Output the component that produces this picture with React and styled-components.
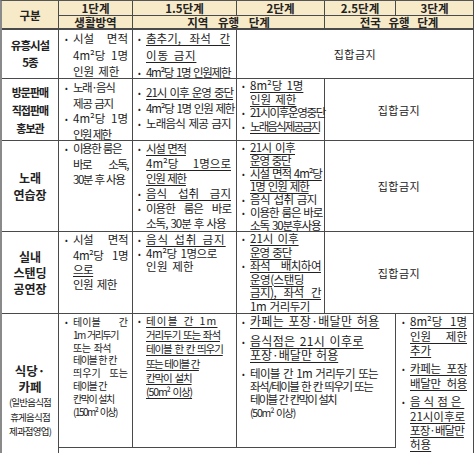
import styled, { createGlobalStyle } from "styled-components";

const GlobalStyle = createGlobalStyle`
  html, body { margin: 0; padding: 0; background: #fff; }
  body {
    font-family: "Noto Sans CJK KR", "Noto Sans", sans-serif;
    color: #222;
  }
`;

const Table = styled.div`
  display: grid;
  grid-template-columns: 57px 74px 104px 88px 71px 78px;
  grid-template-rows: 15px 14px 49px 62px 91px 82px 134px 10px;
  width: 474px;
  border-top: 1px solid #555;
  border-left: 2px solid #8a8a8a;
  box-sizing: border-box;
  font-size: 11.5px;
`;

const Cell = styled.div`
  grid-column: ${(p) => p.$c} / span ${(p) => p.$cs || 1};
  grid-row: ${(p) => p.$r} / span ${(p) => p.$rs || 1};
  border-right: 1px solid #4a4a4a;
  border-bottom: ${(p) => (p.$open ? "none" : p.$thick ? "2px solid #4a4a4a" : "1px solid #4a4a4a")};
  box-sizing: border-box;
  min-width: 0;
`;

const Head = styled(Cell)`
  background: #f7eac8;
  font-weight: 700;
  font-size: 11.5px;
  line-height: 12px;
  display: flex;
  align-items: center;
  justify-content: center;
  word-spacing: ${(p) => p.$ws || "0"};
`;

const Label = styled(Cell)`
  display: flex;
  flex-direction: column;
  align-items: center;
  justify-content: center;
  text-align: center;
  font-weight: 700;
  font-size: ${(p) => p.$fs || "12px"};
  line-height: ${(p) => p.$lh || "17px"};
  letter-spacing: ${(p) => p.$ls || "0"};
  padding-top: ${(p) => p.$pt || "0"};
`;

const Small = styled.span`
  font-weight: 400;
  font-size: 9.5px;
  line-height: 14.5px;
  letter-spacing: -0.8px;
`;

const Body = styled(Cell)`
  padding: ${(p) => p.$pad || "0 4px 0 5px"};
  line-height: ${(p) => p.$lh || "15px"};
  display: flex;
  flex-direction: column;
  gap: ${(p) => p.$gap || "0"};
  word-spacing: 1.5px;
`;

const Ban = styled(Cell)`
  display: flex;
  align-items: center;
  justify-content: center;
  font-size: 11px;
  letter-spacing: 0.5px;
`;

const Item = styled.div`
  letter-spacing: ${(p) => p.$ls || "0"};
  font-size: ${(p) => p.$fs || "inherit"};
`;

const Line = styled.span`
  display: block;
  padding-left: ${(p) => (p.$first ? "0" : "8px")};
  text-align: left;
  text-align-last: ${(p) => (p.$j ? "justify" : "left")};
  white-space: nowrap;
  ${(p) => p.$ls && `letter-spacing: ${p.$ls};`}
  ${(p) => p.$fs && `font-size: ${p.$fs};`}
`;

const U = styled.span`
  text-decoration: underline;
  text-decoration-thickness: 1px;
  text-underline-offset: 2px;
`;

const Dot = styled.span`
  display: inline-block;
  width: 8px;
  font-size: 8px;
  vertical-align: 1px;
  letter-spacing: 0;
`;

// a line is a string, or { t, ls, fs } when it is squeezed differently from its item
// j: indexes of the lines that are spread to the full cell width
function Li({ lines, u, j = [], ls, fs }) {
  return (
    <Item $ls={ls} $fs={fs}>
      {lines.map((l, i) => {
        const line = typeof l === "string" ? { t: l } : l;
        const inner = (
          <>
            {i === 0 && <Dot>•</Dot>}
            {line.t}
          </>
        );
        return (
          <Line key={i} $first={i === 0} $j={j.includes(i)} $ls={line.ls} $fs={line.fs}>
            {u ? <U>{inner}</U> : inner}
          </Line>
        );
      })}
    </Item>
  );
}

export default function App() {
  return (
    <>
      <GlobalStyle />
      <Table>
        <Head $c={1} $r={1} $rs={2} $thick>구분</Head>
        <Head $c={2} $r={1}>1단계</Head>
        <Head $c={3} $r={1}>1.5단계</Head>
        <Head $c={4} $r={1}>2단계</Head>
        <Head $c={5} $r={1}>2.5단계</Head>
        <Head $c={6} $r={1}>3단계</Head>
        <Head $c={2} $r={2} $thick>생활방역</Head>
        <Head $c={3} $r={2} $cs={2} $thick $ws="7px">지역 유행 단계</Head>
        <Head $c={5} $r={2} $cs={2} $thick $ws="5px">전국 유행 단계</Head>

        {/* 유흥시설 */}
        <Label $c={1} $r={3} $fs="11.5px" $ls="-1px">유흥시설<br />5종</Label>
        <Body $c={2} $r={3} $lh="16px" $pad="0 4px 0 6px">
          <Li lines={["시설 면적", "4m²당 1명", "인원 제한"]} j={[0, 1]} />
        </Body>
        <Body $c={3} $r={3} $lh="16px" $pad="0 6px 0 5px" $gap="1px">
          <Li u lines={["춤추기, 좌석 간", { t: "이동 금지", ls: "0.8px" }]} j={[0]} />
          <Li ls="-1.3px" lines={["4m²당 1명 인원제한"]} />
        </Body>
        <Ban $c={4} $r={3} $cs={3}>집합금지</Ban>

        {/* 방문판매 */}
        <Label $c={1} $r={4} $fs="11px" $lh="18px" $ls="-1px">방문판매<br />직접판매<br />홍보관</Label>
        <Body $c={2} $r={4} $lh="15.5px" $pad="1px 4px 0 6px">
          <Li ls="-1.3px" lines={[{ t: "노래·음식", ls: "-1.5px" }, "제공 금지"]} />
          <Li ls="-1.8px" lines={[{ t: "4m²당 1명", ls: "0" }, "인원 제한"]} j={[0]} />
        </Body>
        <Body $c={3} $r={4} $lh="15.5px" $pad="6px 4px 0 5px">
          <Li u ls="-1px" lines={["21시 이후 운영 중단"]} />
          <Li ls="-1.2px" lines={["4m²당 1명 인원 제한"]} />
          <Li ls="-0.8px" lines={["노래음식 제공 금지"]} />
        </Body>
        <Body $c={4} $r={4} $lh="13.7px" $pad="0 3px 0 5px">
          <Li u lines={["8m²당 1명", "인원 제한"]} />
          <Li ls="-1.3px" lines={["21시이후운영중단"]} />
          <Li u ls="-1.9px" lines={["노래음식제공금지"]} />
        </Body>
        <Ban $c={5} $r={4} $cs={2}>집합금지</Ban>

        {/* 노래연습장 */}
        <Label $c={1} $r={5}>노래<br />연습장</Label>
        <Body $c={2} $r={5} $lh="15.5px" $pad="0 4px 0 6px">
          <Li ls="-1.5px" lines={["이용한 룸은", "바로 소독,", "30분 후 사용"]} j={[1]} />
        </Body>
        <Body $c={3} $r={5} $lh="15.1px" $pad="0 5px 0 5px">
          <Li u ls="-1.3px" lines={["시설 면적", { t: "4m²당 1명으로", ls: "0" }, "인원 제한"]} j={[1]} />
          <Li u lines={["음식 섭취 금지"]} j={[0]} />
          <Li ls="-1px" lines={["이용한 룸은 바로", "소독, 30분 후 사용"]} j={[0]} />
        </Body>
        <Body $c={4} $r={5} $lh="13px" $pad="0 3px 0 5px">
          <Li u ls="-0.6px" lines={["21시 이후", { t: "운영 중단", ls: "-1.2px" }]} />
          <Li u ls="-1.1px" lines={["시설 면적 4m²당", "1명 인원 제한"]} j={[0]} />
          <Li ls="-0.6px" lines={["음식 섭취 금지"]} />
          <Li ls="-1.1px" lines={["이용한 룸은 바로", "소독 30분후사용"]} j={[0]} />
        </Body>
        <Ban $c={5} $r={5} $cs={2}>집합금지</Ban>

        {/* 실내 스탠딩 공연장 */}
        <Label $c={1} $r={6} $lh="16px">실내<br />스탠딩<br />공연장</Label>
        <Body $c={2} $r={6} $lh="14.5px" $pad="0 4px 0 6px">
          <Item $ls="-0.5px">
            <Line $first $j><Dot>•</Dot>시설 면적</Line>
            <Line $j>4m²당 1명</Line>
            <Line><U>으로</U></Line>
            <Line>인원 제한</Line>
          </Item>
        </Body>
        <Body $c={3} $r={6} $lh="13.5px" $pad="1px 5px 0 5px">
          <Li u ls="1px" lines={["음식 섭취 금지"]} />
          <Li ls="-0.4px" lines={["4m²당 1명으로", { t: "인원 제한", ls: "0.3px" }]} />
        </Body>
        <Body $c={4} $r={6} $lh="13.5px" $pad="0 3px 0 5px">
          <Li u lines={["21시 이후", { t: "운영 중단", ls: "-1px" }]} />
          <Li u ls="-0.5px" lines={["좌석 배치하여", "운영(스탠딩", "금지), 좌석 간", "1m 거리두기"]} j={[0, 1, 2]} />
        </Body>
        <Ban $c={5} $r={6} $cs={2}>집합금지</Ban>

        {/* 식당·카페 */}
        <Label $c={1} $r={7} $rs={2} $open $lh="16px" $fs="12.5px" $pt="30px">
          식당·<br />카페
          <Small>(일반음식점<br />휴게음식점<br />제과점영업)</Small>
        </Label>
        <Body $c={2} $r={7} $lh="12.8px" $pad="2px 4px 0 6px">
          <Li
            fs="10px"
            ls="-1.5px"
            lines={[
              { t: "테이블 간", ls: "0" },
              "1m 거리두기",
              { t: "또는 좌석", ls: "-0.5px" },
              "테이블 한 칸",
              { t: "띄우기 또는", ls: "0" },
              "테이블 간",
              "칸막이 설치",
              "(150m² 이상)",
            ]}
            j={[0, 4]}
          />
        </Body>
        <Body $c={3} $r={7} $lh="14.2px" $pad="0 6px 0 5px">
          <Li
            u
            fs="10.5px"
            ls="-1.1px"
            lines={[
              { t: "테이블 간 1m", ls: "1.2px" },
              "거리두기 또는 좌석",
              "테이블 한 칸 띄우기",
              { t: "또는 테이블 간", ls: "-1.6px" },
              "칸막이 설치",
              "(50m² 이상)",
            ]}
          />
        </Body>
        <Body $c={4} $r={7} $cs={2} $lh="13px" $pad="0 6px 0 5px" $gap="6px">
          <Li u fs="12px" ls="0.3px" lines={["카페는 포장·배달만 허용"]} />
          <Li u fs="12px" lines={[{ t: "음식점은 21시 이후로", ls: "0.3px" }, "포장·배달만 허용"]} />
          <Li
            ls="-1.5px"
            lines={[
              { t: "테이블 간 1m 거리두기 또는", ls: "-0.7px" },
              "좌석/테이블 한 칸 띄우기 또는",
              { t: "테이블 간 칸막이 설치", ls: "-1.8px" },
              { t: "(50m² 이상)", ls: "-1.2px", fs: "10.5px" },
            ]}
          />
        </Body>
        <Body $c={6} $r={7} $rs={2} $open $lh="14px" $pad="0 6px 0 6px" $gap="4px">
          <Li u lines={["8m²당 1명", "인원 제한", "추가"]} j={[0, 1]} />
          <Li u ls="-0.3px" lines={["카페는 포장", "배달만 허용"]} j={[0, 1]} />
          <Li u lines={[{ t: "음식점은", ls: "3px" }, "21시이후로", { t: "포장·배달만", ls: "-0.9px" }, "허용"]} />
        </Body>
      </Table>
    </>
  );
}
